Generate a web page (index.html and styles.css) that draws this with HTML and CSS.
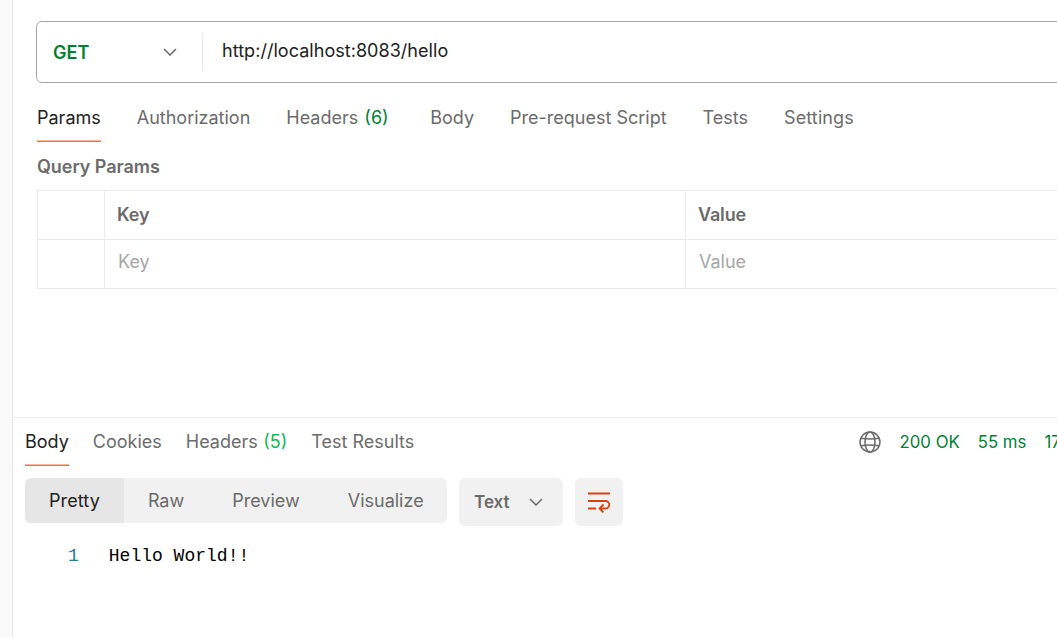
FILE: index.html
```html
<!DOCTYPE html>
<html lang="en">
<head>
<meta charset="utf-8">
<title>Request</title>
<link rel="stylesheet" href="styles.css">
</head>
<body>
<div class="app">
  <aside class="rail"></aside>
  <main class="main">
    <section class="request">
      <div class="url-bar">
        <div class="method"><span>GET</span>
          <svg class="chevron" width="14" height="8" viewBox="0 0 14 8"><path d="M1 1l6 6 6-6"/></svg>
        </div>
        <div class="url"><span>http://localhost:8083/hello</span></div>
      </div>
      <nav class="tabs request-tabs">
        <div class="tab active"><span>Params</span></div>
        <div class="tab"><span>Authorization</span></div>
        <div class="tab headers"><span>Headers <b>(6)</b></span></div>
        <div class="tab"><span>Body</span></div>
        <div class="tab"><span>Pre-request Script</span></div>
        <div class="tab"><span>Tests</span></div>
        <div class="tab settings"><span>Settings</span></div>
      </nav>
      <h2 class="title"><span>Query Params</span></h2>
      <div class="grid">
        <div class="cell"></div>
        <div class="cell head"><span>Key</span></div>
        <div class="cell head"><span>Value</span></div>
        <div class="cell"></div>
        <div class="cell empty"><span>Key</span></div>
        <div class="cell empty"><span>Value</span></div>
      </div>
    </section>
    <section class="response">
      <div class="response-top">
        <nav class="tabs response-tabs">
          <div class="tab active"><span>Body</span></div>
          <div class="tab"><span>Cookies</span></div>
          <div class="tab"><span>Headers <b>(5)</b></span></div>
          <div class="tab"><span>Test Results</span></div>
        </nav>
        <div class="status">
          <svg class="globe" width="22" height="22" viewBox="0 0 22 22"><circle cx="11" cy="11" r="10"/><ellipse cx="11" cy="11" rx="5" ry="10"/><path d="M2 7.2Q11 8.8 20 7.2M2 14.8Q11 13.2 20 14.8"/></svg>
          <span class="code">200 OK</span>
          <span class="time">55 ms</span>
          <span class="size">17</span>
        </div>
      </div>
      <div class="toolbar">
        <div class="views">
          <div class="view selected"><span>Pretty</span></div>
          <div class="view"><span>Raw</span></div>
          <div class="view"><span>Preview</span></div>
          <div class="view"><span>Visualize</span></div>
        </div>
        <div class="format"><span>Text</span>
          <svg class="chevron" width="14" height="8" viewBox="0 0 14 8"><path d="M1 1l6 6 6-6"/></svg>
        </div>
        <div class="wrap">
          <svg width="24" height="22" viewBox="0 0 24 22"><path d="M1 2.5h22M1 10h17.5a3.75 3.75 0 0 1 0 7.5H13M16.5 13.5l-4 4 4 4M1 17.5h8"/></svg>
        </div>
      </div>
      <div class="code-line"><span class="line-number">1</span><span>Hello World!!</span></div>
    </section>
  </main>
</div>
</body>
</html>
```
FILE: styles.css
```css
* { box-sizing: border-box; }
body {
  margin: 0;
  overflow: hidden;
  background: #fff;
  color: #6b6b6b;
  font: 18px/24px Inter, "Liberation Sans", sans-serif;
}
span { white-space: nowrap; }
svg { fill: none; stroke: #6b6b6b; stroke-width: 1.5; flex: none; }
.app { display: flex; width: 1057px; height: 637px; }
.rail { flex: none; width: 13px; background: #f9f9f9; border-right: 1px solid #e6e6e6; }
.main { display: flex; flex-direction: column; width: 1044px; overflow: hidden; }
.request { height: 417px; padding: 21px 0 0 23px; }
.url-bar {
  display: flex;
  align-items: center;
  width: 1040px;
  height: 62px;
  border: 1px solid #a6a6a6;
  border-radius: 6px;
}
.method {
  display: flex;
  align-items: center;
  justify-content: space-between;
  width: 166px;
  height: 37px;
  padding: 0 25px 0 16px;
  border-right: 1px solid #e6e6e6;
  color: #007f31;
  font-weight: 600;
}
.method span { padding-top: 2px; }
.url { padding: 0 0 3px 19px; color: #212121; letter-spacing: 0.04px; }
.tabs { display: flex; }
.tab { display: flex; flex: none; }
.tab b { margin-left: 1px; font-weight: 400; color: #007f31; }
.tab.active { color: #212121; border-bottom: 1px solid #ff6c37; box-shadow: inset 0 -1px #ffb59b; }
.request-tabs { gap: 36px; height: 36px; margin: 23px 0 0 1px; }
.request-tabs .headers { width: 108px; }
.request-tabs .settings { letter-spacing: 0.12px; }
.title { margin: 13px 0 0 1px; font-size: 18px; line-height: 24px; font-weight: 600; letter-spacing: -0.05px; }
.grid {
  display: grid;
  grid-template-columns: 67px 581px 380px;
  grid-template-rows: 49px 49px;
  width: 1029px;
  margin: 11px 0 0 1px;
  border-top: 1px solid #ebebeb;
  border-left: 1px solid #ebebeb;
}
.cell { padding: 12px 0 0 12px; border-right: 1px solid #ebebeb; border-bottom: 1px solid #ebebeb; }
.head { font-weight: 600; letter-spacing: -0.15px; }
.empty { padding: 10px 0 0 13px; color: #a6a6a6; }
.response { flex: 1; padding-left: 12px; border-top: 1px solid #ebebeb; }
.response-top { display: flex; justify-content: space-between; height: 48px; padding-top: 12px; }
.response-tabs { gap: 24px; }
.response-tabs b { color: #0cbb52; margin-left: 0.5px; }
.status { display: flex; gap: 18px; width: 198px; color: #007f31; font-size: 16.8px; }
.globe { margin-top: 1px; }
.code { padding-left: 0.5px; }
.toolbar { display: flex; gap: 12px; margin-top: 12px; }
.views { display: flex; width: 422px; height: 45px; border-radius: 6px; background: #f1f1f1; overflow: hidden; }
.view { padding: 11px 24px 0; }
.selected { width: 99px; background: #e6e6e6; color: #212121; letter-spacing: 0.1px; }
.format {
  display: flex;
  align-items: center;
  justify-content: space-between;
  width: 104px;
  height: 48px;
  padding: 0 20px 0 15px;
  border-radius: 6px;
  background: #f1f1f1;
  font-size: 17px;
  font-weight: 600;
}
.wrap { display: flex; align-items: center; justify-content: center; width: 48px; height: 48px; border-radius: 6px; background: #f1f1f1; }
.wrap svg { stroke: #d9430d; stroke-width: 1.8; }
.code-line { display: flex; gap: 30px; margin: 18px 0 0 43px; color: #000; font-family: "Liberation Mono", monospace; }
.line-number { color: #237893; }
```
